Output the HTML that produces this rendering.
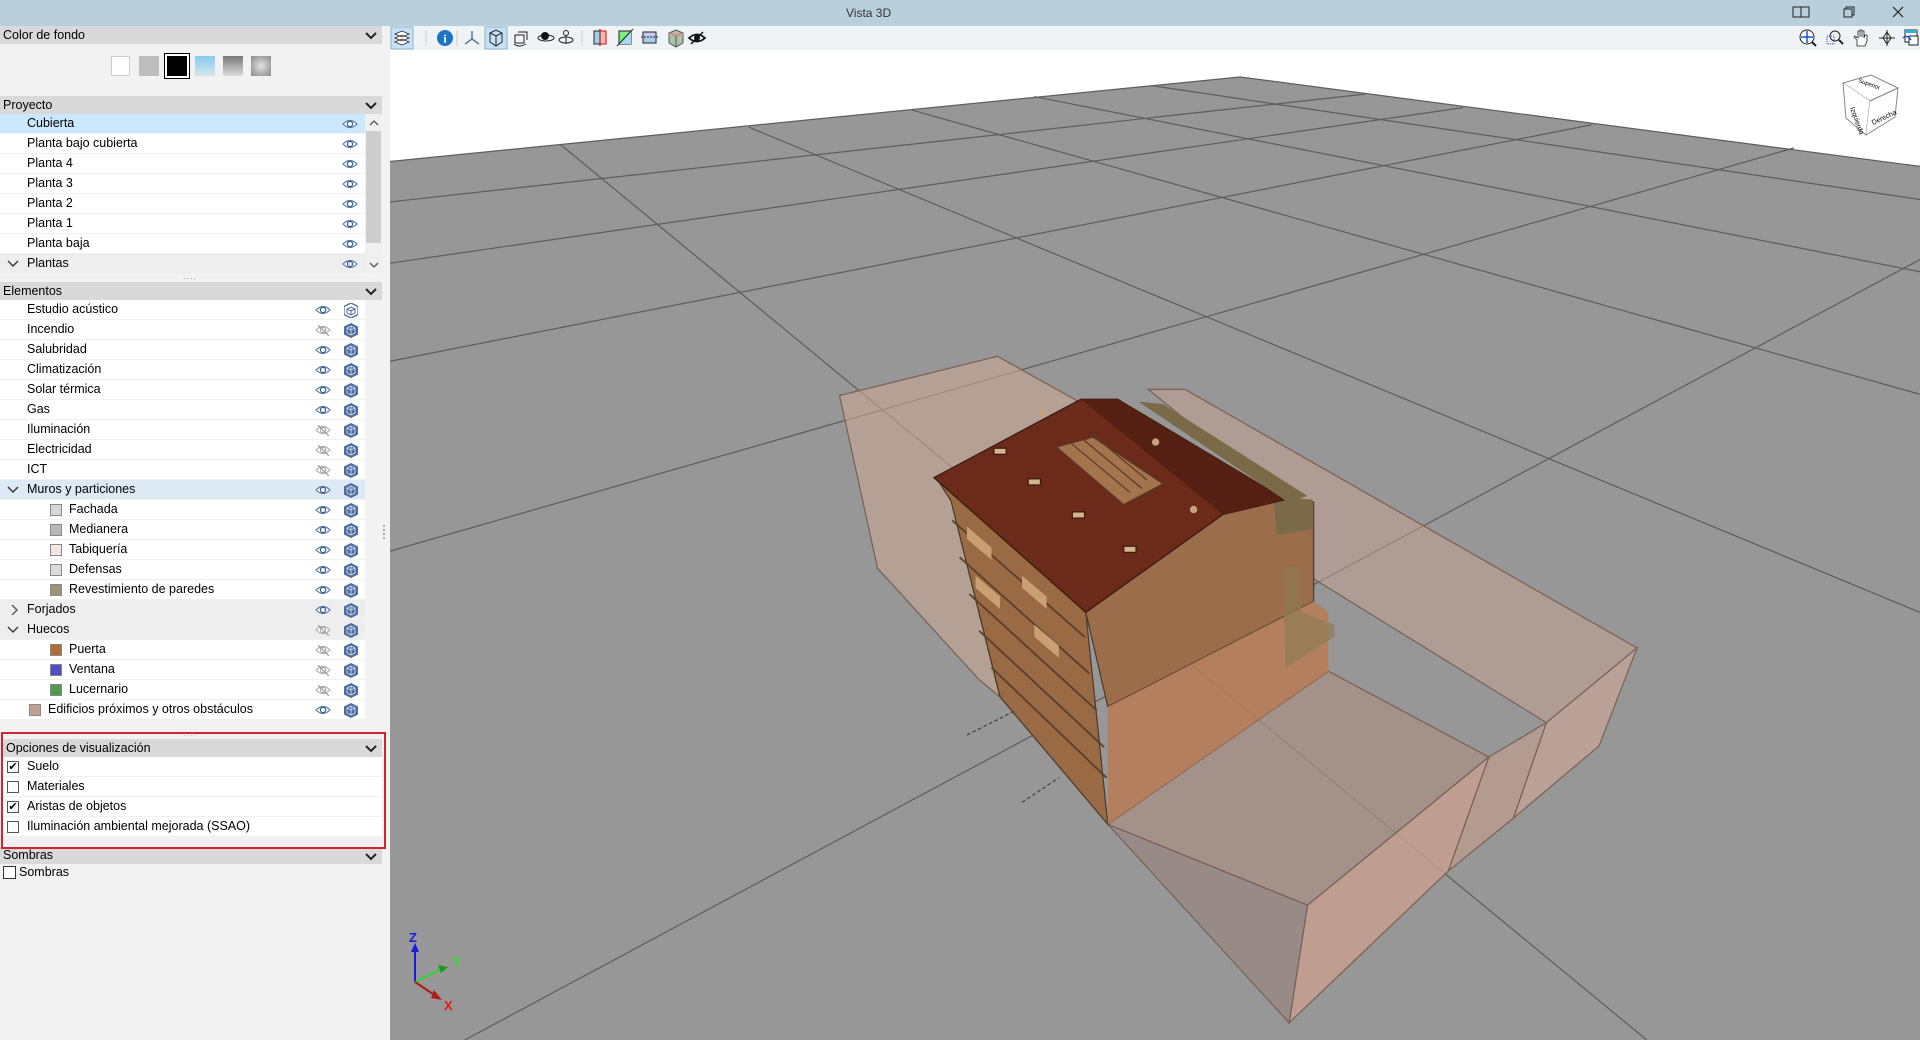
<!DOCTYPE html>
<html><head><meta charset="utf-8">
<style>
*{margin:0;padding:0;box-sizing:border-box}
body{width:1920px;height:1040px;overflow:hidden;background:#f2f2f2;font-family:"Liberation Sans",sans-serif;font-size:12px;color:#000;position:relative}
.abs{position:absolute}
.title{left:0;top:0;width:1920px;height:26px;background:#b9cfdc}
.hdr{position:absolute;left:0;width:382px;height:18px;background:#d9d9d9;padding-left:3px;line-height:18px;font-size:12.5px}
.hdr svg{position:absolute;right:5px;top:5px}
.row{position:absolute;left:0;width:365px;height:20px;background:#fff;border-bottom:1px solid #f0f0f0;line-height:19px;font-size:12.5px}
.row .t{position:absolute;left:27px}
.row .t2{position:absolute;left:69px}
.row .sw{position:absolute;left:50px;top:4px;width:12px;height:12px;border:1px solid #888}
.row .exp{position:absolute;left:7px;top:5px}
.eye{position:absolute;top:5px}
.cube{position:absolute;top:3px}
.sel{background:#cce8ff}
.grp{background:#eeeeee}
.cb{position:absolute;left:7px;top:4px;width:12px;height:12px;border:1px solid #555;background:#fff;font-size:11px;line-height:10px;text-align:center}
</style></head><body>
<svg width="0" height="0" style="position:absolute">
<defs>
<g id="dn"><path d="M1 2l5 5 5-5" fill="none" stroke="#222" stroke-width="2"/></g>
<g id="dn2"><path d="M1 2l5 5 5-5" fill="none" stroke="#333" stroke-width="1.4"/></g>
<g id="rt2"><path d="M3 0l5 5-5 5" fill="none" stroke="#555" stroke-width="1.4"/></g>
<g id="eye"><path d="M1 5q7-7 14 0q-7 7-14 0z" fill="#fff" stroke="#5a7cab" stroke-width="1.2"/><circle cx="8" cy="5" r="2.6" fill="none" stroke="#3a5c8b" stroke-width="1.3"/></g>
<g id="eyex"><path d="M1 5q7-7 14 0q-7 7-14 0z" fill="#fff" stroke="#b0b0b0" stroke-width="1.2"/><circle cx="8" cy="5" r="2.6" fill="none" stroke="#aaa" stroke-width="1.2"/><path d="M3 0l11 11" stroke="#999" stroke-width="1.2"/></g>
<g id="cube"><path d="M7 0l7 3.5v8L7 15 0 11.5v-8z" fill="#4d6d9e"/><path d="M7 3l4 2v5l-4 2-4-2V5zM7 3v9M3 5l4 2 4-2" fill="none" stroke="#cfd9ea" stroke-width=".9"/></g>
<g id="cubeo"><path d="M7 0l7 3.5v8L7 15 0 11.5v-8z" fill="#fff" stroke="#4d6d9e" stroke-width="1.3"/><path d="M7 4l4 2v4l-4 2-4-2V6zM7 7v5M3 6l4 2 4-2" fill="none" stroke="#4d6d9e" stroke-width="1"/></g>
</defs></svg>
<div class="abs title"></div>
<div class="abs" style="left:846px;top:6px;font-size:12px;color:#333">Vista 3D</div>
<svg class="abs" style="left:1790px;top:4px" width="130" height="18">
<rect x="3" y="3" width="8" height="10" fill="none" stroke="#222"/><rect x="11" y="3" width="8" height="10" fill="none" stroke="#222"/>
<rect x="54" y="5" width="8" height="8" fill="none" stroke="#222"/><path d="M56 5V3h8v8h-2" fill="none" stroke="#222"/>
<path d="M103 3l10 10M113 3l-10 10" stroke="#222" stroke-width="1.2"/>
</svg>

<div class="abs" style="left:390px;top:26px;width:1530px;height:24px;background:#f0f3f6"></div>
<svg class="abs" style="left:390px;top:26px" width="320" height="24">
<rect x="1" y="1" width="22" height="22" fill="#c6e1f5" stroke="#8eb2cc"/>
<path d="M5 8l7-3 7 3-7 3z M5 12l7-3 7 3-7 3z M5 16l7-3 7 3-7 3z" fill="#fff" stroke="#222" stroke-width=".8"/>
<line x1="36" y1="4" x2="36" y2="20" stroke="#ccc"/>
<circle cx="55" cy="12" r="8" fill="#1a74c8"/><text x="55" y="16.5" font-size="12" font-weight="bold" fill="#fff" text-anchor="middle" font-family="Liberation Serif">i</text>
<line x1="67" y1="4" x2="67" y2="20" stroke="#ccc"/>
<path d="M82 5v8l-7 5M82 13l7 5" stroke="#557a99" stroke-width="1.5" fill="none"/>
<rect x="95" y="1" width="22" height="22" fill="#c6e1f5" stroke="#8eb2cc"/>
<path d="M100 7l6-3 6 3v9l-6 4-6-4z M100 7l6 3 6-3M106 10v10" fill="none" stroke="#222"/>
<path d="M125 9h9v8h-9z M128 6h9v8" fill="none" stroke="#222"/><path d="M124 18q5 4 12 0" fill="none" stroke="#222"/>
<ellipse cx="156" cy="12" rx="8" ry="3" fill="none" stroke="#222"/><circle cx="155" cy="10" r="4" fill="#111"/>
<ellipse cx="176" cy="14" rx="7" ry="3" fill="none" stroke="#222"/><circle cx="176" cy="7" r="2.5" fill="none" stroke="#222"/><path d="M176 9v9" stroke="#222"/>
<line x1="192" y1="4" x2="192" y2="20" stroke="#ccc"/>
<rect x="204" y="5" width="12" height="13" fill="#9fd0ea" stroke="#222"/><rect x="210" y="5" width="6" height="13" fill="#f5b5b5" stroke="#e00"/><path d="M210 3v17" stroke="#222" stroke-dasharray="2 1"/>
<rect x="229" y="5" width="12" height="13" fill="#7cf07c" stroke="#222"/><path d="M229 18L241 5v13z" fill="#a8d8f0"/><path d="M227 20L243 3" stroke="#222"/>
<rect x="253" y="6" width="13" height="11" fill="#c8c8f5" stroke="#222"/><path d="M251 11h17" stroke="#222" stroke-dasharray="2 1"/><rect x="254" y="12" width="11" height="4" fill="#9fd0ea"/>
<path d="M279 7l7-3 7 3v10l-7 4-7-4z" fill="#a9c4a8" stroke="#555"/><path d="M279 7l7 3 7-3M286 10v11" stroke="#555" fill="none"/><rect x="279" y="7" width="14" height="3" fill="#e89a9a" opacity=".7"/>
<path d="M299 12q8-7 16 0q-8 7-16 0z" fill="none" stroke="#111" stroke-width="1.8"/><circle cx="307" cy="12" r="3" fill="#111"/><path d="M301 18L313 6" stroke="#111" stroke-width="1.5"/>
</svg>
<svg class="abs" style="left:1795px;top:26px" width="125" height="24">
<circle cx="12" cy="11" r="7" fill="#fff" stroke="#222"/><path d="M12 5v12M6 11h12" stroke="#1a55d0" stroke-width="1.5"/><path d="M17 16l4 4" stroke="#222" stroke-width="2"/>
<circle cx="40" cy="10" r="5" fill="none" stroke="#222"/><path d="M44 14l4 4" stroke="#222" stroke-width="2"/><rect x="32" y="10" width="7" height="8" fill="none" stroke="#2244cc" stroke-dasharray="1 1"/>
<path d="M62 20v-6l-3-3 1-1 3 2V5h2v6V4h2v7V5h2v7l1-3h2v6l-2 5z" fill="#fff" stroke="#222" stroke-width=".8"/>
<path d="M88 12l4-6 4 6-4 6zM84 12h16M92 4v16" fill="none" stroke="#222"/>
<rect x="110" y="4" width="12" height="12" fill="#fff" stroke="#222"/><rect x="110" y="4" width="12" height="3" fill="#2bb3d8"/><rect x="114" y="10" width="9" height="9" fill="#fff" stroke="#222"/><path d="M108 12q4-4 8 2" stroke="#1a55d0" stroke-width="1.5" fill="none"/>
</svg>

<div class="abs" style="left:390px;top:50px;width:1530px;height:990px;background:#fff"></div>
<svg class="abs" style="left:390px;top:50px" width="1530" height="990" viewBox="319 41 1249 808" preserveAspectRatio="none">
<polygon points="319,132 1013,63 1568,136 1568,849 319,849" fill="#979797"/>
<g stroke="#5e5e5e" stroke-width="1" fill="none">
<path d="M319,132L1013,63L1568,136"/>
<path d="M319,165L1115,77"/>
<path d="M319,215L1195,88"/>
<path d="M319,295L1300,102"/>
<path d="M319,450L1465,121"/>
<path d="M380,849L1568,212"/>
<path d="M458,118L1345,849"/>
<path d="M612,104L1568,500"/>
<path d="M745,90L1568,322"/>
<path d="M845,79L1568,222"/>
<path d="M940,70L1568,163"/>
</g>
<g stroke="#7a6055" stroke-width="1">
<polygon points="686,323 815,291 890,333 765,390 777,409 817,569 800,555 717,464" fill="#c9a696" fill-opacity=".6"/>
<polygon points="938,318 968,318 1337,529 1263,590 1064,467 1045,405" fill="#c2a293" fill-opacity=".55"/>
<polygon points="1263,590 1337,529 1306,609 1236,668" fill="#d2a898" fill-opacity=".6"/>
<polygon points="1216,618 1263,590 1236,668 1183,711" fill="#c79e8e" fill-opacity=".6"/>
<polygon points="905,673 1085,548 1216,618 1068,739" fill="#a89085" fill-opacity=".75"/>
<polygon points="1068,739 1216,618 1183,711 1053,835" fill="#c9a090" fill-opacity=".8"/>
<polygon points="905,673 1068,739 1053,835" fill="#988680" fill-opacity=".75"/>
</g>
<polygon points="765,390 887,500 905,673 817,569 777,409" fill="#9a6a45" stroke="#4a3a2a"/>
<g stroke="#5a3f2c" fill="none" stroke-width="1.5"><path d="M778,425l108,95M784,455l106,95M792,485l104,95M800,515l102,95M810,545l94,90"/></g>
<g fill="#c9a072"><path d="M790,430l20,17v10l-20,-17z M835,470l20,17v10l-20,-17z M797,470l20,17v10l-20,-17z M845,510l20,17v10l-20,-17z"/></g>
<polygon points="887,500 999,420 1053,407 1073,410 1073,491 905,577" fill="#9b6d4b" stroke="#4a3a2a"/>
<polygon points="905,577 1073,491 1085,500 1085,548 905,673" fill="#b87a55" fill-opacity=".85"/>
<polygon points="1040,405 1072,408 1072,432 1043,437" fill="#7a6a48"/>
<polygon points="1048,463 1060,462 1063,500 1090,510 1090,520 1050,545" fill="#8f7a55" fill-opacity=".7"/>
<polygon points="763,390 883,326 913,326 1050,408 999,420 887,500" fill="#6b2a1a" stroke="#3a1a10"/>
<polygon points="883,326 913,326 1050,408 999,420" fill="#561f14"/>
<polygon points="930,328 950,330 1068,405 1052,410" fill="#7a6a48"/>
<polygon points="863,365 893,357 950,395 918,412" fill="#a4744c" stroke="#5a3a2a"/>
<g stroke="#5a3a2a"><path d="M875,362l48,40M885,359l48,40M895,357l42,35"/></g>
<g fill="#d7b48c" stroke="#3a1a10"><rect x="812" y="366" width="10" height="5"/><rect x="840" y="391" width="10" height="5"/><rect x="876" y="418" width="10" height="5"/><rect x="918" y="446" width="10" height="5"/></g>
<circle cx="852" cy="337" r="3" fill="#c8a27a"/><circle cx="944" cy="361" r="3" fill="#c8a27a"/><circle cx="975" cy="416" r="3" fill="#c8a27a"/>
<path d="M790,600l40,-20M835,655l30,-20" stroke="#444" stroke-dasharray="3 2"/>
</svg>
<svg class="abs" style="left:400px;top:920px" width="80" height="100">
<path d="M15 62V28" stroke="#1a1ae0" stroke-width="2"/><path d="M11 32l4-9 4 9z" fill="#1a1ae0"/>
<text x="9" y="22" fill="#1a1ae0" font-size="13" font-weight="bold">Z</text>
<path d="M15 62L44 48" stroke="#2ad62a" stroke-width="2"/><path d="M38 45l10 2-7 6z" fill="#1a9a1a"/>
<text x="52" y="46" fill="#2ae02a" font-size="13" font-weight="bold">Y</text>
<path d="M15 62L36 76" stroke="#b01a1a" stroke-width="2"/><path d="M34 70l8 10-11-2z" fill="#b01a1a"/>
<text x="44" y="90" fill="#e01a1a" font-size="13" font-weight="bold">X</text>
</svg>
<svg class="abs" style="left:1836px;top:70px" width="70" height="70">
<path d="M7 13L35 5 62 18 34 31z" fill="#fff" stroke="#888"/><path d="M7 13L10 48 30 65 34 31" fill="#fff" stroke="#888"/><path d="M34 31L62 18 59 47 30 65" fill="#fff" stroke="#888"/>
<text x="14" y="38" font-size="7" transform="rotate(70 14 38)">Izquierda</text><text x="37" y="55" font-size="7" transform="rotate(-25 37 55)">Derecha</text><text x="22" y="12" font-size="6" transform="rotate(20 22 12)">Superior</text>
</svg>

<div class="abs" style="left:382px;top:26px;width:8px;height:1014px;background:#f2f2f2"></div>
<div class="hdr" style="top:26px">Color de fondo<svg width="12" height="9"><use href="#dn"/></svg></div>
<div class="abs" style="left:111px;top:56px;width:19px;height:20px;background:#fff;border:1px solid #ccc"></div>
<div class="abs" style="left:139px;top:56px;width:20px;height:20px;background:#bdbdbd"></div>
<div class="abs" style="left:164px;top:53px;width:26px;height:26px;border:1px solid #000;padding:2px;background:#fff"><div style="width:20px;height:20px;background:#000"></div></div>
<div class="abs" style="left:195px;top:56px;width:20px;height:20px;background:linear-gradient(#86ccee,#d8e6ee)"></div>
<div class="abs" style="left:223px;top:56px;width:20px;height:20px;background:linear-gradient(#777,#ddd)"></div>
<div class="abs" style="left:251px;top:56px;width:20px;height:20px;background:radial-gradient(#e0e0e0,#8a8a8a)"></div>

<div class="hdr" style="top:96px">Proyecto<svg width="12" height="9"><use href="#dn"/></svg></div>
<div class="abs" style="left:365px;top:114px;width:17px;height:160px;background:#f0f0f0"></div>
<div class="abs" style="left:366px;top:131px;width:15px;height:112px;background:#cdcdcd"></div>
<svg class="abs" style="left:369px;top:119px" width="10" height="7"><path d="M1 6l4-4 4 4" fill="none" stroke="#555" stroke-width="1.3"/></svg>
<svg class="abs" style="left:369px;top:262px" width="10" height="7"><path d="M1 1l4 4 4-4" fill="none" stroke="#555" stroke-width="1.3"/></svg>
<div class="abs" style="left:183px;top:271px;font-size:9px;color:#999;letter-spacing:1px">....</div>
<div class="hdr" style="top:282px">Elementos<svg width="12" height="9"><use href="#dn"/></svg></div>

<div class="abs" style="left:383px;top:525px;width:3px;height:14px;border-left:2px dotted #aaa"></div>
<div class="abs" style="left:183px;top:728px;font-size:9px;color:#bbb;letter-spacing:1px">....</div>

<div class="hdr" style="top:739px;left:3px;width:379px">Opciones de visualización<svg width="12" height="9"><use href="#dn"/></svg></div>
<div class="row" style="top:757px;left:3px;width:379px"><div class="cb" style="left:4px">&#10004;</div><span class="t" style="left:24px">Suelo</span></div>
<div class="row" style="top:777px;left:3px;width:379px"><div class="cb" style="left:4px"></div><span class="t" style="left:24px">Materiales</span></div>
<div class="row" style="top:797px;left:3px;width:379px"><div class="cb" style="left:4px">&#10004;</div><span class="t" style="left:24px">Aristas de objetos</span></div>
<div class="row" style="top:817px;left:3px;width:379px"><div class="cb" style="left:4px"></div><span class="t" style="left:24px">Iluminación ambiental mejorada (SSAO)</span></div>
<div class="hdr" style="top:848px;height:16px;line-height:14px">Sombras<svg width="12" height="9" style="top:4px"><use href="#dn"/></svg></div>
<div class="abs" style="left:3px;top:866px;width:13px;height:13px;border:1px solid #333;background:#fff"></div>
<div class="abs" style="left:19px;top:865px;font-size:12.5px">Sombras</div>
<div class="abs" style="left:1px;top:732px;width:385px;height:117px;border:2px solid #d2232f"></div>

<div id="rows"></div>
<script>
var html='';
function row(top,label,opt){
 opt=opt||{};
 var cls='row'+(opt.sel?' sel':'')+(opt.grp?' grp':'');
 var s='<div class="'+cls+'" style="top:'+top+'px'+(opt.bg?';background:'+opt.bg:'')+'">';
 if(opt.exp) s+='<svg class="exp" width="12" height="10"'+(opt.exp=='rt2'?' style="left:9px"':'')+'><use href="#'+opt.exp+'"/></svg>';
 if(opt.sw){ s+='<span class="sw" style="background:'+opt.sw+(opt.swl?';left:'+opt.swl+'px':'')+'"></span>'; }
 s+='<span class="'+(opt.sub?'t2':'t')+'"'+(opt.tl?' style="left:'+opt.tl+'px"':'')+'>'+label+'</span>';
 var ex=opt.ex||342;
 s+='<svg class="eye" style="left:'+ex+'px" width="16" height="11"><use href="#'+(opt.hid?'eyex':'eye')+'"/></svg>';
 if(opt.cube) s+='<svg class="cube" style="left:344px" width="14" height="15"><use href="#'+(opt.cubeo?'cubeo':'cube')+'"/></svg>';
 s+='</div>';
 html+=s;
}
var p=['Cubierta','Planta bajo cubierta','Planta 4','Planta 3','Planta 2','Planta 1','Planta baja'];
p.forEach(function(l,i){row(114+i*20,l,{sel:i==0,ex:342});});
row(254,'Plantas',{grp:1,exp:'dn2',ex:342});
var e=[
['Estudio acústico',{cubeo:1}],['Incendio',{hid:1}],['Salubridad',{}],['Climatización',{}],['Solar térmica',{}],['Gas',{}],['Iluminación',{hid:1}],['Electricidad',{hid:1}],['ICT',{hid:1}],
['Muros y particiones',{bg:'#dde9f5',exp:'dn2'}],
['Fachada',{sub:1,sw:'#d8d8d8'}],['Medianera',{sub:1,sw:'#b8b8b8'}],['Tabiquería',{sub:1,sw:'#f2e8e2'}],['Defensas',{sub:1,sw:'#dcdcdc'}],['Revestimiento de paredes',{sub:1,sw:'#9c9478'}],
['Forjados',{grp:1,exp:'rt2'}],['Huecos',{grp:1,exp:'dn2',hid:1}],
['Puerta',{sub:1,sw:'#b06d3a',hid:1}],['Ventana',{sub:1,sw:'#4f4fc8',hid:1}],['Lucernario',{sub:1,sw:'#4f9a4f',hid:1}],
['Edificios próximos y otros obstáculos',{sw:'#c0a090',swl:29,tl:48}]
];
e.forEach(function(x,i){var o=x[1];o.cube=1;o.ex=315;row(300+i*20,x[0],o);});
document.getElementById('rows').innerHTML=html;
</script>
</body></html>
